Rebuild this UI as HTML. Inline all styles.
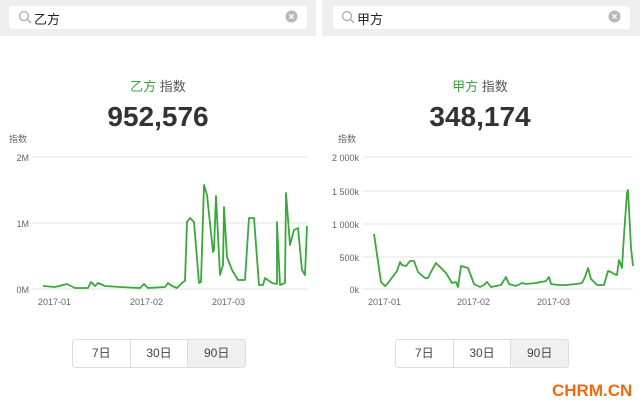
<!DOCTYPE html>
<html><head><meta charset="utf-8"><style>
body{margin:0;width:640px;height:413px;background:#fff;position:relative;overflow:hidden;font-family:"Liberation Sans","Noto Sans CJK SC",sans-serif;}
.abs{position:absolute}
.hdr{top:0;height:36px;background:#efeff1}
.box{top:6px;height:23px;background:#fff;border-radius:3px}
.q{font-size:13px;color:#222;top:9px}
.title{top:76px;width:316px;text-align:center;font-size:13px;color:#555}
.title b{font-weight:normal;color:#3aa23a}
.num{top:101px;width:316px;text-align:center;font-size:28px;font-weight:bold;color:#333}
.lab{font-size:9px;color:#666}
.btns{top:339px;height:27px;display:flex;border:1px solid #ddd;border-radius:3px;overflow:hidden}
.btns div{width:57px;text-align:center;line-height:27px;font-size:12px;color:#444;border-right:1px solid #ddd}
.btns div:last-child{border-right:none;background:#f0f0f0}
</style></head><body>
<div class="abs hdr" style="left:0;width:316px"></div>
<div class="abs hdr" style="left:322px;width:318px"></div>
<div class="abs box" style="left:9px;width:298px"></div>
<div class="abs box" style="left:333px;width:297px"></div>
<svg class="abs" style="left:18px;top:10px" width="14" height="14"><circle cx="6" cy="6" r="4.5" fill="none" stroke="#aaa" stroke-width="1.3"/><line x1="9.3" y1="9.3" x2="13" y2="13" stroke="#aaa" stroke-width="1.3"/></svg>
<svg class="abs" style="left:341px;top:10px" width="14" height="14"><circle cx="6" cy="6" r="4.5" fill="none" stroke="#aaa" stroke-width="1.3"/><line x1="9.3" y1="9.3" x2="13" y2="13" stroke="#aaa" stroke-width="1.3"/></svg>
<div class="abs q" style="left:34px">乙方</div>
<div class="abs q" style="left:357px">甲方</div>
<svg class="abs" style="left:285px;top:10px" width="13" height="13"><circle cx="6.5" cy="6.5" r="6" fill="#b8b8b8"/><path d="M4.3 4.3L8.7 8.7M8.7 4.3L4.3 8.7" stroke="#fff" stroke-width="1.3"/></svg>
<svg class="abs" style="left:608px;top:10px" width="13" height="13"><circle cx="6.5" cy="6.5" r="6" fill="#b8b8b8"/><path d="M4.3 4.3L8.7 8.7M8.7 4.3L4.3 8.7" stroke="#fff" stroke-width="1.3"/></svg>

<div class="abs title" style="left:0"><b>乙方</b> 指数</div>
<div class="abs num" style="left:0">952,576</div>
<div class="abs title" style="left:322px"><b>甲方</b> 指数</div>
<div class="abs num" style="left:322px">348,174</div>

<div class="abs lab" style="left:9px;top:132px">指数</div>
<div class="abs lab" style="left:338px;top:132px">指数</div>

<svg class="abs" style="left:0;top:0" width="640" height="413">
<g stroke="#e3e3e3" stroke-width="1">
<line x1="33" y1="157" x2="308" y2="157"/><line x1="33" y1="223" x2="308" y2="223"/><line x1="33" y1="289" x2="308" y2="289"/>
<line x1="363" y1="157" x2="633" y2="157"/><line x1="363" y1="191" x2="633" y2="191"/><line x1="363" y1="224" x2="633" y2="224"/><line x1="363" y1="257" x2="633" y2="257"/><line x1="363" y1="289" x2="633" y2="289"/>
</g>
<g font-size="9" fill="#666" font-family="Liberation Sans,sans-serif" text-anchor="end">
<text x="29" y="161">2M</text><text x="29" y="227">1M</text><text x="29" y="293">0M</text>
<text x="359" y="161">2 000k</text><text x="359" y="195">1 500k</text><text x="359" y="228">1 000k</text><text x="359" y="261">500k</text><text x="359" y="293">0k</text>
</g>
<g font-size="9" fill="#666" font-family="Liberation Sans,sans-serif">
<text x="38" y="305">2017-01</text><text x="130" y="305">2017-02</text><text x="212" y="305">2017-03</text>
<text x="368" y="305">2017-01</text><text x="457" y="305">2017-02</text><text x="537" y="305">2017-03</text>
</g>
<g fill="none" stroke="#3aa83a" stroke-width="1.8" stroke-linejoin="round">
<polyline points="43,286 55,287 67,284 75,288 88,288 91,282 95,286 98,283 105,286 120,287 140,288 144,284 148,288 165,287 168,283 172,286 177,288 183,282 185,281 187,222 190,218 194,222 199,283 201,282 204,185 207,195 213,252 214,250 216,196 220,275 223,265 224,207 227,257 232,270 238,280 245,280 249,218 254,218 259,285 263,285 265,278 272,283 277,284 277,222 280,285 285,283 286,193 290,245 294,230 298,228 302,270 305,275 307,226"/>
<polyline points="374,234 381,282 385,286 388,283 397,271 400,262 402,265 406,266 410,261 414,261 418,272 425,278 428,278 432,270 436,263 439,266 446,273 452,283 456,282 458,287 461,266 468,268 474,284 480,287 484,285 487,282 491,287 496,286 501,285 506,277 509,284 516,286 522,283 526,284 536,283 546,281 549,277 551,284 558,285 566,285 576,284 582,283 585,277 588,268 591,279 597,285 604,285 608,271 611,272 614,274 617,275 619,260 622,268 624,235 627,193 628,190 631,248 633,266"/>
</g>
</svg>

<div class="abs btns" style="left:72px;width:172px"><div>7日</div><div>30日</div><div>90日</div></div>
<div class="abs btns" style="left:395px;width:172px"><div>7日</div><div>30日</div><div>90日</div></div>

<div class="abs" style="left:552px;top:381px;font-size:17px;font-weight:bold;color:#f26a10">CHRM.CN</div>
</body></html>
